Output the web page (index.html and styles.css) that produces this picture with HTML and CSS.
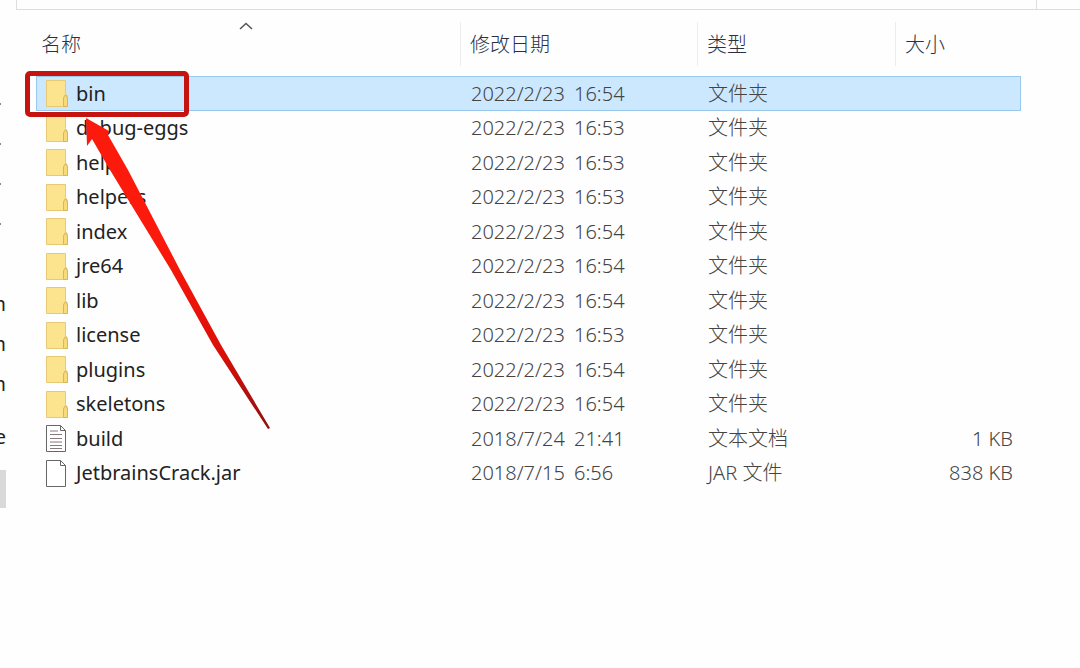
FILE: index.html
```html
<!DOCTYPE html>
<html lang="zh-CN">
<head>
<meta charset="utf-8">
<title>文件列表</title>
<link rel="stylesheet" href="styles.css">
</head>
<body>
<svg class="defs" aria-hidden="true">
  <symbol id="folder" viewBox="0 0 22 27">
    <path d="M.5.5h19v13l2 3v10h-21z" fill="#fce38d" stroke="#e6c876"/>
    <path d="M17.500 26.500v-8.500l1.500-3h1l1.500 3v8.500z" fill="#f8da78" stroke="#d9b65c"/>
  </symbol>
  <symbol id="text" viewBox="0 0 22 27">
    <path d="M.5.5h14l5 5v21h-19z" fill="#fff" stroke="#666"/>
    <path d="M14.500.5v5h5" fill="none" stroke="#666"/>
    <path d="M4 6h8M4 9.500h12M4 13.500h12M4 17h12M4 20.500h12M4 23.500h12" stroke="#86797f"/>
  </symbol>
  <symbol id="blank" viewBox="0 0 22 27">
    <path d="M.5.5h14l5 5v21h-19z" fill="#fff" stroke="#666"/>
    <path d="M14.500.5v5h5" fill="none" stroke="#666"/>
  </symbol>
</svg>
<div class="toolbar"><div class="address"></div><div class="search"></div></div>
<div class="explorer">
  <nav class="tree">
    <ul>
      <li class="pin"></li><li class="pin"></li><li class="pin"></li><li class="pin"></li><li></li>
      <li>m</li><li>m</li><li>m</li><li class="drive">e</li><li class="current"></li>
    </ul>
  </nav>
  <main class="files">
    <table>
      <colgroup><col class="c-name"><col class="c-date"><col class="c-type"><col class="c-size"></colgroup>
      <thead>
        <tr>
          <th>名称<svg class="sort" viewBox="0 0 14 8"><path d="M1 7l6-5.500L13 7" fill="none" stroke="#555" stroke-width="1.500"/></svg></th>
          <th>修改日期</th><th>类型</th><th>大小</th>
        </tr>
      </thead>
      <tbody>
        <tr class="selected"><td><span class="name"><svg class="icon"><use href="#folder"/></svg>bin</span></td><td>2022/2/23 <span class="time">16:54</span></td><td>文件夹</td><td></td></tr>
        <tr><td><span class="name"><svg class="icon"><use href="#folder"/></svg>debug-eggs</span></td><td>2022/2/23 <span class="time">16:53</span></td><td>文件夹</td><td></td></tr>
        <tr><td><span class="name"><svg class="icon"><use href="#folder"/></svg>help</span></td><td>2022/2/23 <span class="time">16:53</span></td><td>文件夹</td><td></td></tr>
        <tr><td><span class="name"><svg class="icon"><use href="#folder"/></svg>helpers</span></td><td>2022/2/23 <span class="time">16:53</span></td><td>文件夹</td><td></td></tr>
        <tr><td><span class="name"><svg class="icon"><use href="#folder"/></svg>index</span></td><td>2022/2/23 <span class="time">16:54</span></td><td>文件夹</td><td></td></tr>
        <tr><td><span class="name"><svg class="icon"><use href="#folder"/></svg>jre64</span></td><td>2022/2/23 <span class="time">16:54</span></td><td>文件夹</td><td></td></tr>
        <tr><td><span class="name"><svg class="icon"><use href="#folder"/></svg>lib</span></td><td>2022/2/23 <span class="time">16:54</span></td><td>文件夹</td><td></td></tr>
        <tr><td><span class="name"><svg class="icon"><use href="#folder"/></svg>license</span></td><td>2022/2/23 <span class="time">16:53</span></td><td>文件夹</td><td></td></tr>
        <tr><td><span class="name"><svg class="icon"><use href="#folder"/></svg>plugins</span></td><td>2022/2/23 <span class="time">16:54</span></td><td>文件夹</td><td></td></tr>
        <tr><td><span class="name"><svg class="icon"><use href="#folder"/></svg>skeletons</span></td><td>2022/2/23 <span class="time">16:54</span></td><td>文件夹</td><td></td></tr>
        <tr><td><span class="name"><svg class="icon"><use href="#text"/></svg>build</span></td><td>2018/7/24 <span class="time">21:41</span></td><td>文本文档</td><td>1 KB</td></tr>
        <tr><td><span class="name"><svg class="icon"><use href="#blank"/></svg>JetbrainsCrack.jar</span></td><td>2018/7/15 <span class="time">6:56</span></td><td>JAR 文件</td><td>838 KB</td></tr>
      </tbody>
    </table>
    <div class="mark"></div>
    <svg class="arrow" viewBox="0 0 190 316">
      <defs><linearGradient id="red" x1="0" y1="0" x2="0" y2="1"><stop offset=".4" stop-color="#fb1a0c"/><stop offset=".75" stop-color="#dc0f08"/><stop offset="1" stop-color="#8e1010"/></linearGradient></defs>
      <path d="M5 3L28 16 27 20 47 55 99 155 140 230 189 313 187 314 132 230 90 155 29 55 11 24 6 31z" fill="url(#red)"/>
    </svg>
  </main>
</div>
</body>
</html>
```
FILE: styles.css
```css
* { box-sizing: border-box; }

body {
  margin: 0;
  background: #fefefe;
  color: #222;
  font: 20px/26px "Noto Sans", "Noto Sans CJK SC", sans-serif;
  overflow: hidden;
}

.defs { display: none; }

.toolbar {
  display: flex;
  height: 10px;
  padding-left: 16px;
}
.address { flex: 1; border: solid #ddd; border-width: 0 1px 1px; }
.search { width: 43px; border-bottom: 1px solid #ddd; }

.explorer { display: flex; }

.tree { flex: none; width: 36px; padding-top: 74px; }
.tree ul { width: 6px; margin: 0; padding: 0; list-style: none; }
.tree li {
  display: flex;
  justify-content: flex-end;
  align-items: center;
  height: 40px;
  overflow: hidden;
}
.tree .pin::before { content: ""; width: 1px; height: 2px; margin-right: 5px; background: #888; }
.tree .drive { height: 66px; }
.tree .current { height: 38px; background: #d9d9d9; }

.files { position: relative; flex: 1; padding: 12px 59px 0 0; }

table { width: 100%; border-collapse: separate; border-spacing: 0; table-layout: fixed; }
.c-date { width: 237px; }
.c-type { width: 198px; }
.c-size { width: 126px; }

th {
  position: relative;
  height: 54px;
  padding: 0 0 8px 10px;
  color: #2c2f42;
  font-weight: 300;
  text-align: left;
  background: linear-gradient(#ececec, #ececec) 0 0 / 1px 44px no-repeat;
}
th:first-child { padding-left: 5px; background: none; }
.sort { position: absolute; top: 0; left: 203px; width: 14px; height: 8px; }

td {
  height: 35px;
  padding: 0 0 0 11px;
  color: #444;
  font-weight: 300;
  white-space: nowrap;
}
tr:nth-child(even) td { height: 34px; }
td:first-child { padding-left: 10px; color: #222; font-weight: 400; }
td:last-child { padding: 0 8px 0 0; text-align: right; }

.name { display: flex; align-items: center; gap: 8px; }
.icon { flex: none; width: 22px; height: 27px; }
.time { margin-left: 4px; }

.selected td { background: #cce8ff; border: solid #99c9ef; border-width: 1px 0; }
.selected td:first-child { border-left-width: 1px; padding-left: 9px; }
.selected td:last-child { border-right-width: 1px; }

.mark {
  position: absolute;
  top: 61px;
  left: -11px;
  width: 164px;
  height: 46px;
  border: 5px solid #c5140f;
  border-radius: 5px;
}
.arrow { position: absolute; top: 105px; left: 45px; width: 190px; height: 316px; }
```
